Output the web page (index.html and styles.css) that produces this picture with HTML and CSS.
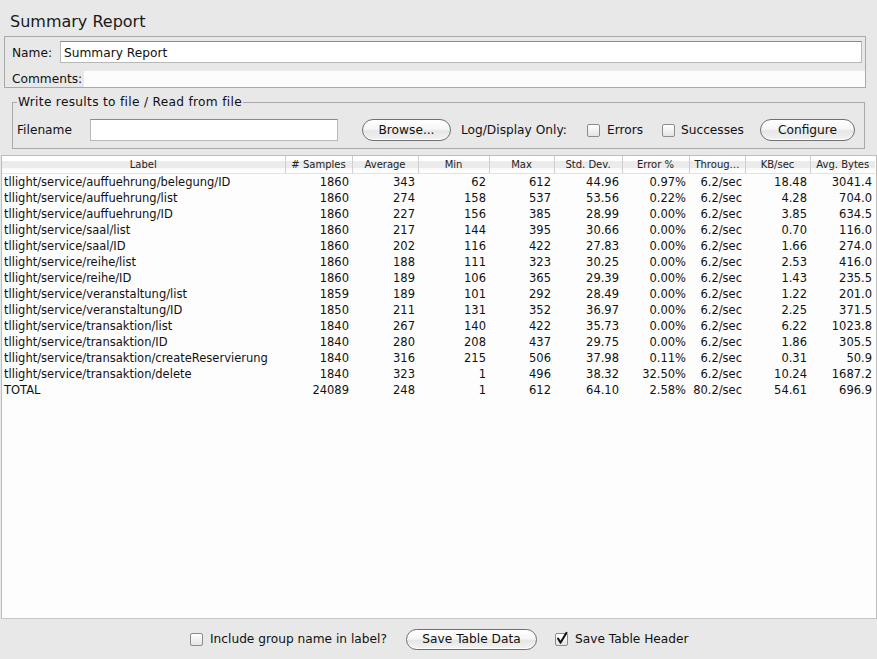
FILE: index.html
```html
<!DOCTYPE html>
<html>
<head>
<meta charset="utf-8">
<link rel="stylesheet" href="styles.css">
</head>
<body>
<div class="page">
  <div class="title">Summary Report</div>
  <div class="name-panel">
    <div class="name-row">
      <span class="lbl name-lbl">Name:</span>
      <div class="field name-field">Summary Report</div>
    </div>
    <div class="comments-row">
      <span class="lbl comments-lbl">Comments:</span>
      <div class="comments-area"></div>
    </div>
  </div>
  <fieldset class="file-panel">
    <legend>Write results to file / Read from file</legend>
    <div class="file-row">
      <span class="lbl filename-lbl">Filename</span>
      <div class="field filename-field"></div>
      <button class="btn browse">Browse...</button>
      <span class="lbl logdisplay">Log/Display Only:</span>
      <span class="cb"></span>
      <span class="lbl cb-text errors-text">Errors</span>
      <span class="cb"></span>
      <span class="lbl cb-text succ-text">Successes</span>
      <button class="btn configure">Configure</button>
    </div>
  </fieldset>
  <div class="pane">
    <table class="grid">
      <colgroup>
        <col class="c-label"><col class="c-samples"><col class="c-avg"><col class="c-min"><col class="c-max"><col class="c-std"><col class="c-err"><col class="c-thr"><col class="c-kb"><col class="c-bytes">
      </colgroup>
      <thead>
        <tr><th>Label</th><th># Samples</th><th>Average</th><th>Min</th><th>Max</th><th>Std. Dev.</th><th>Error %</th><th>Throug…</th><th>KB/sec</th><th class="last">Avg. Bytes</th></tr>
      </thead>
      <tbody>
        <tr><td>tllight/service/auffuehrung/belegung/ID</td><td>1860</td><td>343</td><td>62</td><td>612</td><td>44.96</td><td>0.97%</td><td>6.2/sec</td><td>18.48</td><td>3041.4</td></tr>
        <tr><td>tllight/service/auffuehrung/list</td><td>1860</td><td>274</td><td>158</td><td>537</td><td>53.56</td><td>0.22%</td><td>6.2/sec</td><td>4.28</td><td>704.0</td></tr>
        <tr><td>tllight/service/auffuehrung/ID</td><td>1860</td><td>227</td><td>156</td><td>385</td><td>28.99</td><td>0.00%</td><td>6.2/sec</td><td>3.85</td><td>634.5</td></tr>
        <tr><td>tllight/service/saal/list</td><td>1860</td><td>217</td><td>144</td><td>395</td><td>30.66</td><td>0.00%</td><td>6.2/sec</td><td>0.70</td><td>116.0</td></tr>
        <tr><td>tllight/service/saal/ID</td><td>1860</td><td>202</td><td>116</td><td>422</td><td>27.83</td><td>0.00%</td><td>6.2/sec</td><td>1.66</td><td>274.0</td></tr>
        <tr><td>tllight/service/reihe/list</td><td>1860</td><td>188</td><td>111</td><td>323</td><td>30.25</td><td>0.00%</td><td>6.2/sec</td><td>2.53</td><td>416.0</td></tr>
        <tr><td>tllight/service/reihe/ID</td><td>1860</td><td>189</td><td>106</td><td>365</td><td>29.39</td><td>0.00%</td><td>6.2/sec</td><td>1.43</td><td>235.5</td></tr>
        <tr><td>tllight/service/veranstaltung/list</td><td>1859</td><td>189</td><td>101</td><td>292</td><td>28.49</td><td>0.00%</td><td>6.2/sec</td><td>1.22</td><td>201.0</td></tr>
        <tr><td>tllight/service/veranstaltung/ID</td><td>1850</td><td>211</td><td>131</td><td>352</td><td>36.97</td><td>0.00%</td><td>6.2/sec</td><td>2.25</td><td>371.5</td></tr>
        <tr><td>tllight/service/transaktion/list</td><td>1840</td><td>267</td><td>140</td><td>422</td><td>35.73</td><td>0.00%</td><td>6.2/sec</td><td>6.22</td><td>1023.8</td></tr>
        <tr><td>tllight/service/transaktion/ID</td><td>1840</td><td>280</td><td>208</td><td>437</td><td>29.75</td><td>0.00%</td><td>6.2/sec</td><td>1.86</td><td>305.5</td></tr>
        <tr><td>tllight/service/transaktion/createReservierung</td><td>1840</td><td>316</td><td>215</td><td>506</td><td>37.98</td><td>0.11%</td><td>6.2/sec</td><td>0.31</td><td>50.9</td></tr>
        <tr><td>tllight/service/transaktion/delete</td><td>1840</td><td>323</td><td>1</td><td>496</td><td>38.32</td><td>32.50%</td><td>6.2/sec</td><td>10.24</td><td>1687.2</td></tr>
        <tr><td>TOTAL</td><td>24089</td><td>248</td><td>1</td><td>612</td><td>64.10</td><td>2.58%</td><td>80.2/sec</td><td>54.61</td><td>696.9</td></tr>
      </tbody>
    </table>
  </div>
  <div class="bottom-bar">
    <span class="cb"></span>
    <span class="lbl cb-text group-text">Include group name in label?</span>
    <button class="btn save-data">Save Table Data</button>
    <span class="cb checked"><svg class="check" width="14" height="14" viewBox="0 0 14 14"><path d="M3 6.5 L5.6 10.6 L11.5 0.8" fill="none" stroke="#111" stroke-width="2" stroke-linecap="round" stroke-linejoin="round"/></svg></span>
    <span class="lbl cb-text header-text">Save Table Header</span>
  </div>
</div>
</body>
</html>
```

FILE: styles.css
```css
* { box-sizing: border-box; }
html, body { margin: 0; padding: 0; }
body {
  background: #e8e8e8;
  font-family: "DejaVu Sans", "Liberation Sans", sans-serif;
  font-size: 12.2px;
  color: #111;
}
.page {
  display: flex;
  flex-direction: column;
  height: 100vh;
}
.title {
  padding: 12px 0 0 10px;
  font-size: 16px;
  line-height: 19px;
  color: #1a1a1a;
  height: 31px;
}
.lbl { white-space: nowrap; line-height: 14px; flex: none; }

.name-panel {
  margin: 5px 11px 0 4px;
  border: 1px solid #a9a9a9;
  padding: 4px 0 0 7px;
  display: flex;
  flex-direction: column;
  gap: 8px;
}
.name-row {
  display: flex;
  align-items: center;
  padding-right: 3px;
}
.name-lbl { width: 48px; padding-top: 1px; }
.field {
  background: #fff;
  border: 1px solid #b8b8b8;
  border-top-color: #8a8a8a;
  height: 22px;
  flex: none;
}
.name-field {
  flex: 1;
  padding: 1px 3px 0 3px;
  line-height: 20px;
}
.comments-row {
  display: flex;
  align-items: center;
  height: 16px;
}
.comments-lbl { width: 72px; }
.comments-area {
  flex: 1;
  height: 16px;
  background: #fcfcfc;
}

.file-panel {
  margin: 7px 12px 0 12px;
  border: 1px solid #a9a9a9;
  padding: 0 0 0 4px;
  min-inline-size: 0;
}
.file-panel legend {
  padding: 0 1px;
  line-height: 14px;
  letter-spacing: 0.3px;
}
.file-row {
  display: flex;
  align-items: center;
  padding: 10px 0 7px 0;
  height: 39px;
}
.filename-lbl { width: 73px; }
.filename-field { width: 248px; }
.btn {
  flex: none;
  height: 22px;
  border: 1px solid #6f6f6f;
  border-radius: 11px;
  background: linear-gradient(#ffffff 0%, #f6f6f6 45%, #e6e6e6 55%, #f3f3f3 100%);
  font-family: "DejaVu Sans", "Liberation Sans", sans-serif;
  font-size: 12.2px;
  color: #111;
  padding: 0;
  line-height: 18px;
  box-shadow: inset 0 -1px 0 #ffffff;
}
.browse { width: 89px; margin-left: 24px; }
.logdisplay { margin-left: 10px; width: 126px; }
.cb {
  display: inline-block;
  position: relative;
  width: 13px;
  height: 13px;
  border: 1px solid #8c8c8c;
  border-radius: 2px;
  background: linear-gradient(#ffffff, #e4e4e4);
  flex: none;
}
.cb-text { margin-left: 7px; }
.errors-text { width: 55px; }
.succ-text { margin-left: 6px; width: 79px; }
.configure { width: 95px; }

.pane {
  flex: 1;
  margin: 6px 0 0 1px;
  border: 1px solid #bdbdbd;
  border-bottom-color: #c6c6c6;
  background: #fdfdfd;
  overflow: hidden;
}
.grid {
  border-collapse: collapse;
  table-layout: fixed;
  width: 873px;
}
.c-label { width: 283px; }
.c-samples { width: 67px; }
.c-avg { width: 66px; }
.c-min { width: 71px; }
.c-max { width: 65px; }
.c-std { width: 68px; }
.c-err { width: 67px; }
.c-thr { width: 56px; }
.c-kb { width: 65px; }
.c-bytes { width: 65px; }
.grid th {
  height: 17px;
  padding: 1px 0 0 0;
  font-weight: normal;
  font-size: 10px;
  color: #222;
  text-align: center;
  white-space: nowrap;
  overflow: hidden;
  border-right: 1px solid #cfcfcf;
  border-bottom: 1px solid #e2e2e2;
  background: linear-gradient(#ffffff 0px, #ffffff 5px, #ebebeb 5px, #ebebeb 12px, #f8f8f8 12px, #ffffff 17px);
  line-height: 16px;
}
.grid th.last { border-right: none; }
.grid td {
  height: 16px;
  padding: 0 3px 0 0;
  font-size: 11.5px;
  line-height: 16px;
  text-align: right;
  white-space: nowrap;
  overflow: hidden;
  color: #111;
}
.grid td:first-child {
  text-align: left;
  padding: 0 0 0 2px;
}

.bottom-bar {
  height: 40px;
  flex: none;
  display: flex;
  align-items: center;
  justify-content: center;
  padding-left: 2px;
}
.group-text { width: 181px; }
.save-data { width: 131px; height: 21px; line-height: 17px; margin-left: 15px; }
.bottom-bar .checked { margin-left: 18px; }
.header-text { width: 114px; }
.check {
  position: absolute;
  left: -1px;
  top: -2px;
  overflow: visible;
}
```
